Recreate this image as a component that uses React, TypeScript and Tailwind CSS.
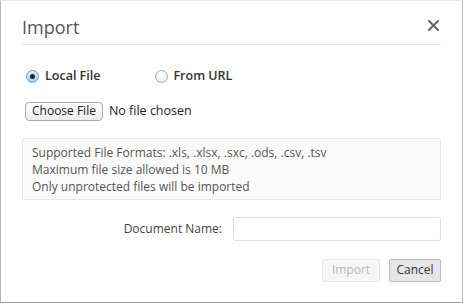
export default function App() {
  return (
    <div
      className="h-[303px] w-[463px] bg-white text-[#444]"
      style={{ fontFamily: '"Open Sans", "Liberation Sans", sans-serif' }}
    >
      <div className="flex h-full w-full flex-col border border-t-[#e8e8e8] border-x-[#b5b5b5] border-b-[#9e9e9e] px-[21px]">
        <div className="flex h-[44px] items-end justify-between border-b border-[#e6e6e6] pb-[5px]">
          <h2 className="text-[18px] leading-6 text-[#555]">Import</h2>
          <svg width="11" height="11" viewBox="0 0 11 11" className="mb-[8px] mr-[2px]">
            <path d="M1 1L10 10M10 1L1 10" stroke="#666" strokeWidth="2" strokeLinecap="round" />
          </svg>
        </div>

        <div className="mt-[22px] flex items-center text-[12.5px] font-semibold text-[#333]">
          <label className="flex items-center gap-[6px] pl-[4px]">
            <span className="flex h-[13px] w-[13px] items-center justify-center rounded-full border border-[#6b9bd8] bg-gradient-to-b from-[#dcecfc] to-[#a8cdf3]">
              <span className="h-[5px] w-[5px] rounded-full bg-[#222]" />
            </span>
            Local File
          </label>
          <label className="ml-[55px] flex items-center gap-[5px]">
            <span className="h-[13px] w-[13px] rounded-full border border-[#a6a6a6] bg-gradient-to-b from-white to-[#ececec]" />
            From URL
          </label>
        </div>

        <div className="mt-[16px] flex items-center gap-[6px] pl-[3px] text-[12.5px]">
          <button className="h-[19px] rounded-[4px] border border-[#a9a9a9] bg-gradient-to-b from-white to-[#ececec] px-[6px] text-[12px] leading-none text-[#222]">
            Choose File
          </button>
          <span className="text-[#222]">No file chosen</span>
        </div>

        <div className="mt-[17px] rounded-[2px] border border-[#e6e6e6] bg-[#fafafa] px-[9px] pb-[4px] pt-[5px] text-[12px] leading-[17px] text-[#555]">
          <p>Supported File Formats: .xls, .xlsx, .sxc, .ods, .csv, .tsv</p>
          <p>Maximum file size allowed is 10 MB</p>
          <p>Only unprotected files will be imported</p>
        </div>

        <div className="mt-[17px] flex items-center justify-end gap-[11px] text-[12px] text-[#444]">
          <span>Document Name:</span>
          <input className="h-[24px] w-[208px] rounded-[2px] border border-[#dedede] bg-white outline-none" />
        </div>

        <div className="mt-[18px] flex justify-end gap-[9px] text-[12px]">
          <button className="h-[23px] w-[58px] rounded-[2px] border border-[#e6e6e6] bg-[#f6f6f6] text-[#b5b5b5]">
            Import
          </button>
          <button className="h-[23px] w-[52px] rounded-[2px] border border-[#bcbcbc] bg-[#e6e6e6] text-[#333]">
            Cancel
          </button>
        </div>
      </div>
    </div>
  );
}
